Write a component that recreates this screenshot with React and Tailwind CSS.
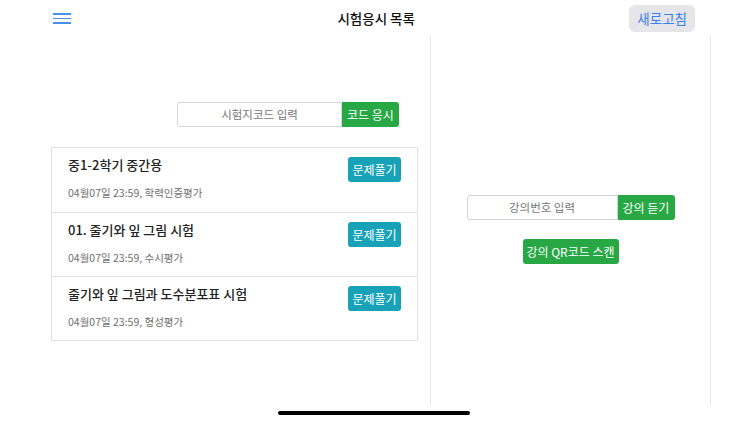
import React from "react";

const font = { fontFamily: '"Noto Sans CJK KR", "Noto Sans", sans-serif' };

const items = [
  { title: "중1-2학기 중간용", sub: "04월07일 23:59, 학력인증평가" },
  { title: "01. 줄기와 잎 그림 시험", sub: "04월07일 23:59, 수시평가" },
  { title: "줄기와 잎 그림과 도수분포표 시험", sub: "04월07일 23:59, 형성평가" },
];

export default function App() {
  return (
    <div
      className="relative w-[750px] h-[422px] bg-white overflow-hidden text-[#222]"
      style={font}
    >
      {/* header */}
      <div className="h-9 flex items-center justify-between pl-[53px] pr-[55px]">
        <button className="flex flex-col gap-[3px] w-[18px] pt-[1px]">
          <span className="block h-[1.5px] bg-[#4a8fe7]" />
          <span className="block h-[1.5px] bg-[#4a8fe7]" />
          <span className="block h-[1.5px] bg-[#4a8fe7]" />
        </button>
        <div className="text-[13.5px] font-medium text-[#111] ml-[52px]">시험응시 목록</div>
        <button className="h-[27px] mt-[1px] px-[8px] rounded-[6px] bg-[#e5e5ea] text-[#3a7ff0] text-[13.5px]">
          새로고침
        </button>
      </div>

      {/* body */}
      <div className="flex h-[369px]">
        {/* left */}
        <div className="w-[431px] border-r border-[#e6e6e6] flex flex-col">
          <div className="flex pt-[66px] pl-[177px]">
            <div className="w-[165px] h-[25px] border border-[#d5d5d5] rounded-l-[3px] flex items-center justify-center text-[11.5px] text-[#777]">
              시험지코드 입력
            </div>
            <button className="w-[57px] h-[25px] bg-[#28a745] text-white text-[12px] rounded-r-[3px]">
              코드 응시
            </button>
          </div>
          <div className="ml-[51px] mt-[20px] w-[367px] border border-[#e2e2e2]">
            {items.map((it, i) => (
              <div
                key={i}
                className={
                  "h-[64px] flex justify-between pl-[16px] pr-[16px] " +
                  (i > 0 ? "border-t border-[#e2e2e2]" : "")
                }
              >
                <div className="flex flex-col">
                  <div className="mt-[7px] text-[13px] font-medium text-[#222]">{it.title}</div>
                  <div className="mt-[10px] text-[10.5px] text-[#6f6f6f]">{it.sub}</div>
                </div>
                <button className="mt-[9px] w-[53px] h-[25px] rounded-[3px] bg-[#17a2b8] text-white text-[12px]">
                  문제풀기
                </button>
              </div>
            ))}
          </div>
        </div>

        {/* right */}
        <div className="w-[280px] border-r border-[#e6e6e6] flex flex-col items-center pt-[159px]">
          <div className="flex">
            <div className="w-[151px] h-[25px] border border-[#d5d5d5] rounded-l-[3px] flex items-center justify-center text-[11.5px] text-[#777]">
              강의번호 입력
            </div>
            <button className="w-[57px] h-[25px] bg-[#28a745] text-white text-[12px] rounded-r-[3px]">
              강의 듣기
            </button>
          </div>
          <button className="mt-[19px] w-[96px] h-[25px] bg-[#28a745] text-white text-[12px] rounded-[3px]">
            강의 QR코드 스캔
          </button>
        </div>
      </div>

      {/* home indicator */}
      <div className="flex justify-center pt-[6px] pr-[2px]">
        <div className="w-[192px] h-[4px] rounded-full bg-black" />
      </div>
    </div>
  );
}
